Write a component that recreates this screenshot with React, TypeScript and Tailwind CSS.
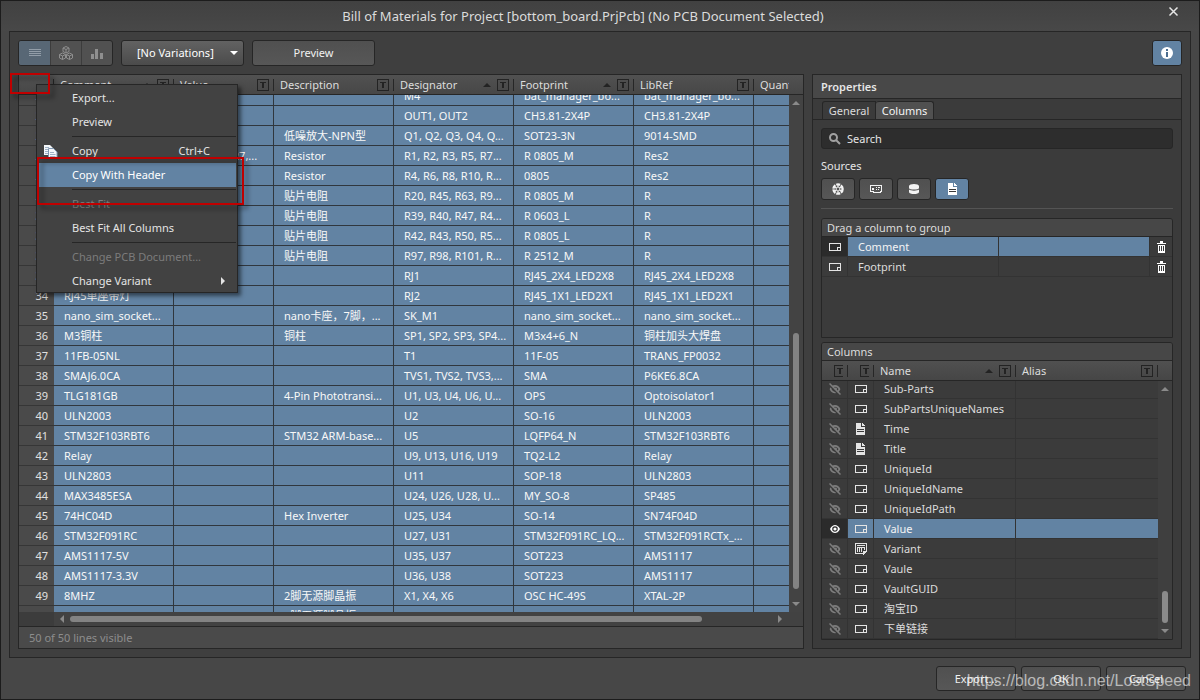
import { useState } from "react";
import type { ReactNode } from "react";

type Part = {
  id: number;
  comment?: string;
  value?: string;
  description?: string;
  designator?: string;
  footprint?: string;
  libRef?: string;
};

const parts: Part[] = [
  { id: 24, designator: "M4", footprint: "bat_manager_bo...", libRef: "bat_manager_bo..." },
  { id: 25, designator: "OUT1, OUT2", footprint: "CH3.81-2X4P", libRef: "CH3.81-2X4P" },
  { id: 26, description: "低噪放大-NPN型", designator: "Q1, Q2, Q3, Q4, Q...", footprint: "SOT23-3N", libRef: "9014-SMD" },
  { id: 27, value: "R1,R2,R5,R7,...", description: "Resistor", designator: "R1, R2, R3, R5, R7...", footprint: "R 0805_M", libRef: "Res2" },
  { id: 28, description: "Resistor", designator: "R4, R6, R8, R10, R...", footprint: "0805", libRef: "Res2" },
  { id: 29, description: "贴片电阻", designator: "R20, R45, R63, R9...", footprint: "R 0805_M", libRef: "R" },
  { id: 30, description: "贴片电阻", designator: "R39, R40, R47, R4...", footprint: "R 0603_L", libRef: "R" },
  { id: 31, description: "贴片电阻", designator: "R42, R43, R50, R5...", footprint: "R 0805_L", libRef: "R" },
  { id: 32, description: "贴片电阻", designator: "R97, R98, R101, R...", footprint: "R 2512_M", libRef: "R" },
  { id: 33, designator: "RJ1", footprint: "RJ45_2X4_LED2X8", libRef: "RJ45_2X4_LED2X8" },
  { id: 34, comment: "RJ45单座带灯", designator: "RJ2", footprint: "RJ45_1X1_LED2X1", libRef: "RJ45_1X1_LED2X1" },
  { id: 35, comment: "nano_sim_socket...", description: "nano卡座，7脚，...", designator: "SK_M1", footprint: "nano_sim_socket...", libRef: "nano_sim_socket..." },
  { id: 36, comment: "M3铜柱", description: "铜柱", designator: "SP1, SP2, SP3, SP4...", footprint: "M3x4+6_N", libRef: "铜柱加头大焊盘" },
  { id: 37, comment: "11FB-05NL", designator: "T1", footprint: "11F-05", libRef: "TRANS_FP0032" },
  { id: 38, comment: "SMAJ6.0CA", designator: "TVS1, TVS2, TVS3,...", footprint: "SMA", libRef: "P6KE6.8CA" },
  { id: 39, comment: "TLG181GB", description: "4-Pin Phototransi...", designator: "U1, U3, U4, U6, U...", footprint: "OPS", libRef: "Optoisolator1" },
  { id: 40, comment: "ULN2003", designator: "U2", footprint: "SO-16", libRef: "ULN2003" },
  { id: 41, comment: "STM32F103RBT6", description: "STM32 ARM-base...", designator: "U5", footprint: "LQFP64_N", libRef: "STM32F103RBT6" },
  { id: 42, comment: "Relay", designator: "U9, U13, U16, U19", footprint: "TQ2-L2", libRef: "Relay" },
  { id: 43, comment: "ULN2803", designator: "U11", footprint: "SOP-18", libRef: "ULN2803" },
  { id: 44, comment: "MAX3485ESA", designator: "U24, U26, U28, U...", footprint: "MY_SO-8", libRef: "SP485" },
  { id: 45, comment: "74HC04D", description: "Hex Inverter", designator: "U25, U34", footprint: "SO-14", libRef: "SN74F04D" },
  { id: 46, comment: "STM32F091RC", designator: "U27, U31", footprint: "STM32F091RC_LQ...", libRef: "STM32F091RCTx_..." },
  { id: 47, comment: "AMS1117-5V", designator: "U35, U37", footprint: "SOT223", libRef: "AMS1117" },
  { id: 48, comment: "AMS1117-3.3V", designator: "U36, U38", footprint: "SOT223", libRef: "AMS1117" },
  { id: 49, comment: "8MHZ", description: "2脚无源脚晶振", designator: "X1, X4, X6", footprint: "OSC HC-49S", libRef: "XTAL-2P" },
  { id: 50, description: "4脚无源脚晶振" },
];

const gridColumns = [
  { name: "Comment", sorted: true },
  { name: "Value", sorted: false },
  { name: "Description", sorted: false },
  { name: "Designator", sorted: true },
  { name: "Footprint", sorted: true },
  { name: "LibRef", sorted: false },
];

const properties = [
  { name: "Sub-Parts", icon: "param" },
  { name: "SubPartsUniqueNames", icon: "param" },
  { name: "Time", icon: "doc" },
  { name: "Title", icon: "doc" },
  { name: "UniqueId", icon: "param" },
  { name: "UniqueIdName", icon: "param" },
  { name: "UniqueIdPath", icon: "param" },
  { name: "Value", icon: "param" },
  { name: "Variant", icon: "variant" },
  { name: "Vaule", icon: "param" },
  { name: "VaultGUID", icon: "param" },
  { name: "淘宝ID", icon: "param" },
  { name: "下单链接", icon: "param" },
];

const buttonStyle =
  "flex items-center justify-center rounded-[3px] border border-[#262626] bg-linear-to-b from-[#505050] to-[#575757] text-[#f0f0f0]";

function Arrow({ dir, className }: { dir: "up" | "down" | "left" | "right"; className?: string }) {
  const shapes = { up: "M0 5 4 1 8 5Z", down: "M0 1 4 5 8 1Z", left: "M5 0 1 4 5 8Z", right: "M1 0 5 4 1 8Z" };
  const flat = dir === "up" || dir === "down";
  return (
    <svg width={flat ? 8 : 6} height={flat ? 6 : 8} className={className} fill="currentColor">
      <path d={shapes[dir]} />
    </svg>
  );
}

function FilterButton({ label }: { label: string }) {
  return (
    <button aria-label={label} className="shrink-0 text-[#232323]">
      <svg width="12" height="12" fill="none" stroke="currentColor" shapeRendering="crispEdges">
        <path d="M.5 .5h11v11h-11z" />
        <path d="M3 3h6v1H3zM5 4h2v5H5z" fill="currentColor" stroke="none" />
      </svg>
    </button>
  );
}

function ParamIcon() {
  return (
    <svg width="12" height="8" fill="none" stroke="#e4e4e4" shapeRendering="crispEdges">
      <path d="M.5 .5h11v7h-11zM8.500 7V4.500H11" />
    </svg>
  );
}

function DocIcon({ color }: { color: string }) {
  return (
    <svg width="9" height="12" shapeRendering="crispEdges">
      <path d="M0 0h5v4h4v8H0z" fill={color} />
      <path d="M6 0h1v1h1v1h1v1H6z" fill={color} />
      <path d="M1 6.500h7M1 8.500h7" stroke="#3b3b3b" />
    </svg>
  );
}

function VariantIcon() {
  return (
    <svg width="12" height="12" fill="none" stroke="#e4e4e4" shapeRendering="crispEdges">
      <path d="M8 10.500H.5V.5h11V8M2 2.500h8M2 4.500h8M2.500 5v4M4.500 5v4M6.500 5v4M9.500 5v2" />
      <path d="M8 8h4l-4 4z" fill="#e4e4e4" stroke="none" />
    </svg>
  );
}

function EyeIcon() {
  return (
    <svg width="12" height="10">
      <path d="M1 5C2.500 2 4.300 1 6 1S9.500 2 11 5C9.500 8 7.700 9 6 9S2.500 8 1 5Z" fill="#fff" />
      <circle cx="6" cy="5" r="2.200" fill="#fff" stroke="#2b2b2b" strokeWidth="1.200" />
    </svg>
  );
}

function HiddenEyeIcon() {
  return (
    <svg width="12" height="12" fill="none" stroke="#7d7d7d">
      <path d="M1.500 6.200C2.600 3.800 4.200 2.900 6 2.900S9.400 3.800 10.500 6.200C9.400 8.600 7.800 9.500 6 9.500S2.600 8.600 1.500 6.200Z" strokeWidth="1.600" />
      <circle cx="6.500" cy="6" r="1.500" fill="#7d7d7d" stroke="none" />
      <path d="M0 1.800 10.200 12" stroke="#3b3b3b" strokeWidth="1.600" />
      <path d="M.5 .5 11.500 11.500" strokeWidth="1.500" />
    </svg>
  );
}

function TrashIcon() {
  return (
    <svg width="9" height="12" shapeRendering="crispEdges">
      <path d="M3 0h3v2h3v1H0V2h3zM1 4h7v8H1z" fill="#fff" />
      <path d="M2.500 5v5M4.500 5v5M6.500 5v5" stroke="#3b3b3b" />
    </svg>
  );
}

function ColumnIcon({ icon }: { icon: string }) {
  if (icon === "doc") return <DocIcon color="#e4e4e4" />;
  if (icon === "variant") return <VariantIcon />;
  return <ParamIcon />;
}

function TitleBar() {
  return (
    <header className="relative flex h-[30px] shrink-0 items-center justify-center bg-linear-to-b from-[#414141] to-[#484848]">
      <h1 className="pr-[34px] text-[13px] text-[#dcdcdc]">
        Bill of Materials for Project [bottom_board.PrjPcb] (No PCB Document Selected)
      </h1>
      <button aria-label="Close" className="absolute top-[5px] right-[20px] text-[#e6e6e6]">
        <svg width="11" height="11" stroke="currentColor" strokeWidth="1.500">
          <path d="M1.500 1.500l8 8M9.500 1.500l-8 8" />
        </svg>
      </button>
    </header>
  );
}

function Toolbar() {
  return (
    <div className="flex h-[26px] shrink-0 gap-2">
      <div className="flex overflow-hidden rounded-[3px] border border-[#262626] bg-[#515151] text-[#8f8f8f]">
        <button aria-label="List view" className="flex w-[31px] items-center justify-center bg-[#586775] text-[#929da8]">
          <svg width="12" height="8" stroke="currentColor" shapeRendering="crispEdges">
            <path d="M0 .5h12M0 2.500h12M0 4.500h12M0 6.500h12" />
          </svg>
        </button>
        <button aria-label="Grouped view" className="flex w-[31px] items-center justify-center border-l border-[#3c3c3c]">
          <svg width="14" height="14" fill="none" stroke="currentColor">
            <path d="M7 .5 10 2v3.500L7 7 4 5.500V2zM4 2l3 1.500L10 2M7 3.500V7" />
            <path d="M3.500 7l3 1.500V12l-3 1.500-3-1.500V8.500zM.5 8.500l3 1.500 3-1.500M3.500 10v3.500" />
            <path d="M10.500 7l3 1.500V12l-3 1.500-3-1.500V8.500zM7.500 8.500l3 1.500 3-1.500M10.500 10v3.500" />
          </svg>
        </button>
        <button aria-label="Chart view" className="flex w-[31px] items-center justify-center border-l border-[#3c3c3c]">
          <svg width="12" height="10" fill="currentColor" className="mt-px">
            <path d="M0 5h3v5H0zM4 0h3v10H4zM9 4h3v6H9z" />
          </svg>
        </button>
      </div>
      <div className="relative w-[123px] rounded-[3px] border border-[#262626] bg-linear-to-b from-[#626262] to-[#4b4b4b] text-white">
        <select aria-label="Variant" className="h-full w-full appearance-none bg-transparent pl-[15px] outline-none">
          <option>[No Variations]</option>
        </select>
        <Arrow dir="down" className="pointer-events-none absolute top-[9px] right-[5px]" />
      </div>
      <button className={`${buttonStyle} w-[123px]`}>Preview</button>
      <button
        aria-label="Information"
        className="ml-auto flex w-[30px] items-center justify-center rounded-[3px] border border-[#262626] bg-[#6283a3]"
      >
        <svg width="12" height="12">
          <circle cx="6" cy="6" r="6" fill="#fff" />
          <path d="M5 2h2v2H5zM5 5h2v5H5z" fill="#4c6e8f" />
        </svg>
      </button>
    </div>
  );
}

function GridCols() {
  return (
    <colgroup>
      <col className="w-[35px]" />
      <col className="w-[120px]" />
      <col className="w-[100px]" />
      <col className="w-[120px]" />
      <col className="w-[120px]" />
      <col className="w-[120px]" />
      <col className="w-[120px]" />
      <col />
    </colgroup>
  );
}

function Cell({ children }: { children?: ReactNode }) {
  return (
    <td className="truncate border-r border-b border-[#30373e] bg-[#6283a3] p-0 pl-[10px] text-[#f8f8f8] last:border-r-0">
      {children}
    </td>
  );
}

function PartsGrid() {
  return (
    <section className="flex min-w-0 flex-1 flex-col border border-[#262626] bg-[#4a4a4a]">
      <div className="shrink-0 border-b border-[#262626] bg-linear-to-b from-[#515151] to-[#474747] pr-[14px]">
        <table className="w-full table-fixed border-collapse">
          <GridCols />
          <thead>
            <tr className="h-[19px]">
              <td className="p-0">
                <span className="ml-auto block h-3 w-px bg-[#262626]" />
              </td>
              {gridColumns.map((column) => (
                <th key={column.name} className="p-0 font-normal">
                  <div className="flex items-center border-r border-[#262626] pr-[4px] pl-[6px]">
                    <span className="flex h-3 flex-1 items-center">{column.name}</span>
                    {column.sorted && <Arrow dir="up" className="mr-[6px] text-[#232323]" />}
                    <FilterButton label={`Filter ${column.name}`} />
                  </div>
                </th>
              ))}
              <th className="overflow-hidden p-0 pl-[6px] text-left font-normal whitespace-nowrap">Quantity</th>
            </tr>
          </thead>
        </table>
      </div>
      <div className="flex min-h-0 flex-1">
        <div className="min-w-0 flex-1 overflow-hidden">
          <table className="-mt-[9px] w-full table-fixed border-separate border-spacing-0">
            <GridCols />
            <tbody>
              {parts.map((part) => (
                <tr key={part.id} className="h-5">
                  <th className="border-b border-[#363636] p-0 pr-[6px] text-right font-normal text-[#e0e0e0]">{part.id}</th>
                  <Cell>{part.comment}</Cell>
                  <Cell>{part.value}</Cell>
                  <Cell>{part.description}</Cell>
                  <Cell>{part.designator}</Cell>
                  <Cell>{part.footprint}</Cell>
                  <Cell>{part.libRef}</Cell>
                  <Cell />
                </tr>
              ))}
            </tbody>
          </table>
        </div>
        <div className="flex w-[14px] shrink-0 flex-col items-center bg-[#434343] py-[5px] text-[#8a8a8a]">
          <Arrow dir="up" />
          <div className="flex w-[6px] flex-1 flex-col justify-end pb-3">
            <div className="h-[53%] rounded-full bg-[#838383]" />
          </div>
          <Arrow dir="down" />
        </div>
      </div>
      <div className="flex h-[14px] shrink-0 items-center bg-[#424242] pr-[20px] text-[#8a8a8a]">
        <div className="h-full w-[35px] bg-[#3c3c3c]" />
        <Arrow dir="left" className="ml-[5px]" />
        <div className="flex-1 px-[5px]">
          <div className="h-[6px] w-[90%] rounded-full bg-[#838383]" />
        </div>
        <Arrow dir="right" />
      </div>
      <footer className="flex h-[22px] shrink-0 items-center border-t border-[#262626] pl-[10px] text-[#8d8d8d]">
        50 of 50 lines visible
      </footer>
    </section>
  );
}

function Sources() {
  const sourceStyle = `${buttonStyle} h-[22px] w-[34px]`;
  return (
    <div className="mt-[8px] border-b border-[#545454] pb-[8px]">
      <h3 className="h-[18px] text-[#e6e6e6]">Sources</h3>
      <div className="mt-[3px] flex gap-1">
        <button aria-label="Altium Cloud" className={sourceStyle}>
          <svg width="12" height="12" fill="none" stroke="#f4f4f4">
            <circle cx="6" cy="6" r="4.600" strokeWidth="2.400" strokeDasharray="4 .82" />
            <circle cx="6" cy="6" r="2" strokeWidth="1" />
            <path d="M6 1v3M6 8v3M1.700 3.500l2.600 1.500M7.700 7l2.600 1.500M1.700 8.500l2.600-1.500M7.700 5l2.600-1.500" />
          </svg>
        </button>
        <button aria-label="PCB" className={sourceStyle}>
          <svg width="12" height="9" fill="none" stroke="#f4f4f4" shapeRendering="crispEdges">
            <path d="M.5 .5h11v6h-1v1H3v-1H.5z" />
            <path d="M2 3h2v2H2zM6 2h1v1H6zM8 2h2v1H8zM6 4h1v1H6zM8 4h1v1H8z" fill="#f4f4f4" stroke="none" />
          </svg>
        </button>
        <button aria-label="Database" className={sourceStyle}>
          <svg width="10" height="12">
            <path d="M0 3C0 .3 10 .3 10 3v2C10 7 0 7 0 5zM0 6.500c1.500 1.500 8.500 1.500 10 0V9c0 2.700-10 2.700-10 0z" fill="#f4f4f4" />
          </svg>
        </button>
        <button
          aria-label="Document"
          className="flex h-[22px] w-[34px] items-center justify-center rounded-[3px] border border-[#262626] bg-[#6283a3]"
        >
          <DocIcon color="#fff" />
        </button>
      </div>
    </div>
  );
}

function GroupList() {
  const [selected, setSelected] = useState("Comment");
  return (
    <div className="mt-[9px] h-[120px] shrink-0 overflow-hidden rounded-t-[3px] border border-[#262626]">
      <h3 className="flex h-[18px] items-center border-b border-[#262626] bg-[#474747] pl-[5px] text-[#dcdcdc]">
        Drag a column to group
      </h3>
      <table className="w-full table-fixed border-separate border-spacing-0">
        <colgroup>
          <col className="w-[26px]" />
          <col />
          <col />
          <col className="w-[22px]" />
        </colgroup>
        <tbody>
          {["Comment", "Footprint"].map((name) => {
            const active = name === selected;
            const cell = `border-r border-b border-[#333333] p-0 ${active ? "bg-[#6283a3] text-[#f4f4f4]" : "text-[#dcdcdc]"}`;
            return (
              <tr key={name} className="h-5" onClick={() => setSelected(name)}>
                <td className={`border-r border-b border-[#333333] p-0 pl-[7px] ${active ? "bg-[#2b2b2b]" : ""}`}>
                  <ParamIcon />
                </td>
                <td className={`${cell} pl-[10px]`}>{name}</td>
                <td className={cell} />
                <td className="border-b border-[#333333] p-0 pl-[7px]">
                  <button aria-label={`Remove ${name}`} className="block">
                    <TrashIcon />
                  </button>
                </td>
              </tr>
            );
          })}
        </tbody>
      </table>
    </div>
  );
}

function PropertyCols() {
  return (
    <colgroup>
      <col className="w-[26px]" />
      <col className="w-[26px]" />
      <col className="w-[142px]" />
      <col />
    </colgroup>
  );
}

function NarrowFilter({ label }: { label: string }) {
  return (
    <div className="flex justify-end border-r border-[#262626] pr-[4px]">
      <div className="flex w-[9px] overflow-hidden">
        <FilterButton label={label} />
      </div>
    </div>
  );
}

function ColumnsList() {
  const [selected, setSelected] = useState("Value");
  const headCell = "flex items-center border-r border-[#262626] pr-[4px] pl-[6px]";
  return (
    <div className="mt-1 flex min-h-0 flex-1 flex-col overflow-hidden rounded-t-[3px] border border-[#262626]">
      <h3 className="flex h-[18px] shrink-0 items-center border-b border-[#262626] bg-[#474747] pl-[5px] text-[#dcdcdc]">
        Columns
      </h3>
      <div className="shrink-0 border-b border-[#262626] bg-linear-to-b from-[#505050] to-[#464646] pr-[14px]">
        <table className="w-full table-fixed border-collapse">
          <PropertyCols />
          <thead>
            <tr className="h-[19px]">
              <th className="p-0">
                <NarrowFilter label="Filter visibility" />
              </th>
              <th className="p-0">
                <NarrowFilter label="Filter source" />
              </th>
              <th className="p-0 font-normal">
                <div className={headCell}>
                  <span className="flex h-3 flex-1 items-center">Name</span>
                  <Arrow dir="up" className="mr-[6px] text-[#232323]" />
                  <FilterButton label="Filter Name" />
                </div>
              </th>
              <th className="p-0 font-normal">
                <div className={headCell}>
                  <span className="flex h-3 flex-1 items-center">Alias</span>
                  <FilterButton label="Filter Alias" />
                </div>
              </th>
            </tr>
          </thead>
        </table>
      </div>
      <div className="flex min-h-0 flex-1">
        <div className="min-w-0 flex-1 overflow-hidden">
          <table className="-mt-[2px] w-full table-fixed border-separate border-spacing-0">
            <PropertyCols />
            <tbody>
              {properties.map((property) => {
                const active = property.name === selected;
                const cell = `border-r border-b border-[#333333] p-0 last:border-r-0 ${active ? "bg-[#6283a3] text-[#f4f4f4]" : "text-[#dcdcdc]"}`;
                return (
                  <tr key={property.name} className="h-5" onClick={() => setSelected(property.name)}>
                    <td className={`border-r border-b border-[#333333] p-0 pl-[7px] ${active ? "bg-[#2b2b2b]" : ""}`}>
                      {active ? <EyeIcon /> : <HiddenEyeIcon />}
                    </td>
                    <td className={cell}>
                      <div className="flex justify-center">
                        <ColumnIcon icon={property.icon} />
                      </div>
                    </td>
                    <td className={`${cell} truncate pl-[10px]`}>{property.name}</td>
                    <td className={cell} />
                  </tr>
                );
              })}
            </tbody>
          </table>
        </div>
        <div className="flex w-[14px] shrink-0 flex-col items-center bg-[#3f3f3f] py-[5px] text-[#8a8a8a]">
          <Arrow dir="up" />
          <div className="flex w-[6px] flex-1 flex-col justify-end pb-[5px]">
            <div className="h-8 rounded-full bg-[#8a8a8a]" />
          </div>
          <Arrow dir="down" />
        </div>
      </div>
    </div>
  );
}

function PropertiesPanel() {
  return (
    <aside className="flex w-[370px] shrink-0 flex-col border border-[#262626] bg-[#3b3b3b]">
      <h2 className="flex h-6 shrink-0 items-center border-b border-[#262626] bg-[#484848] pl-[8px] font-semibold text-[#e6e6e6]">
        Properties
      </h2>
      <div className="flex h-[21px] shrink-0 items-end border-b border-[#262626] pl-[9px]" role="tablist">
        <button role="tab" aria-selected="false" className="h-[18px] w-[54px] rounded-tl-[3px] border border-b-0 border-[#262626] text-[#dcdcdc]">
          General
        </button>
        <button role="tab" aria-selected="true" className="h-[18px] w-[58px] rounded-t-[3px] border border-b-0 border-l-0 border-[#262626] bg-[#505050] text-[#f4f4f4]">
          Columns
        </button>
      </div>
      <div className="flex min-h-0 flex-1 flex-col px-[8px] py-[8px]">
        <label className="flex h-[21px] shrink-0 items-center rounded-[3px] border border-[#262626] bg-[#2d2d2d] pl-[7px]">
          <svg width="12" height="12" fill="none" stroke="#a0a0a0" strokeWidth="2">
            <circle cx="4.500" cy="4.500" r="3.500" />
            <path d="M7 7l4 4" />
          </svg>
          <input
            type="text"
            aria-label="Search"
            placeholder="Search"
            className="min-w-0 flex-1 bg-transparent pl-[6px] outline-none placeholder:text-[#e6e6e6]"
          />
        </label>
        <Sources />
        <GroupList />
        <ColumnsList />
      </div>
    </aside>
  );
}

function MenuItem({ label, shortcut, icon, active, disabled, submenu }: {
  label: string;
  shortcut?: string;
  icon?: ReactNode;
  active?: boolean;
  disabled?: boolean;
  submenu?: boolean;
}) {
  return (
    <button
      role="menuitem"
      disabled={disabled}
      className={`flex h-6 w-full items-center pr-[10px] text-left last:h-[23px] ${active ? "bg-[#6283a3] text-white" : "text-[#e4e4e4]"} disabled:text-[#7c7c7c]`}
    >
      <span className="w-[34px] shrink-0 pl-[5px]">{icon}</span>
      <span className="flex-1">{label}</span>
      {shortcut && <span className="pr-[16px]">{shortcut}</span>}
      {submenu && <Arrow dir="right" />}
    </button>
  );
}

function MenuSeparator() {
  return <hr className="my-[2px] ml-[34px] border-t border-[#262626]" />;
}

function CopyIcon() {
  return (
    <svg width="15" height="15">
      <path d="M1 1h6l3 3v7H1z" fill="#f4f7fa" />
      <path d="M2 3.500h4M2 5.500h5M2 7.500h5M2 9.500h5" stroke="#9fb1c5" />
      <path d="M5.500 4.500h5l3.500 3.500v6H5.500z" fill="#f4f7fa" stroke="#7f97b1" />
      <path d="M7 8.500h4M7 10.500h5.500M7 12.500h5.500" stroke="#9fb1c5" />
    </svg>
  );
}

function ContextMenu() {
  return (
    <div
      role="menu"
      className="absolute top-[83px] left-[35px] w-[202px] border border-[#262626] bg-[#424242] px-px pt-px shadow-[3px_3px_4px_rgba(0,0,0,0.5)]"
    >
      <MenuItem label="Export..." />
      <MenuItem label="Preview" />
      <MenuSeparator />
      <MenuItem label="Copy" shortcut="Ctrl+C" icon={<CopyIcon />} />
      <MenuItem label="Copy With Header" active />
      <MenuSeparator />
      <MenuItem label="Best Fit" disabled />
      <MenuItem label="Best Fit All Columns" />
      <MenuSeparator />
      <MenuItem label="Change PCB Document..." disabled />
      <MenuItem label="Change Variant" submenu />
    </div>
  );
}

function Highlight({ className }: { className: string }) {
  return (
    <div
      className={`pointer-events-none absolute border-2 border-[#c00000] drop-shadow-[4px_4px_2px_rgba(0,0,0,0.4)] ${className}`}
    />
  );
}

export default function App() {
  return (
    <div className="relative flex h-screen min-h-[500px] flex-col overflow-hidden border border-[#1c1c1c] bg-[#474747] font-['Noto_Sans','Noto_Sans_CJK_SC',sans-serif] text-[11px] leading-[18px] text-[#dcdcdc]">
      <TitleBar />
      <main className="mx-[8px] flex min-h-0 flex-1 flex-col border border-[#262626] bg-[#3f3f3f] p-[8px]">
        <Toolbar />
        <div className="mt-[8px] flex min-h-0 flex-1 gap-[8px]">
          <PartsGrid />
          <PropertiesPanel />
        </div>
      </main>
      <div className="relative flex shrink-0 justify-end gap-[5px] pt-[8px] pr-[13px] pb-[8px]">
        <button className={`${buttonStyle} h-[25px] w-20`}>Export...</button>
        <button className={`${buttonStyle} h-[25px] w-20`}>OK</button>
        <button className={`${buttonStyle} h-[25px] w-20`}>Cancel</button>
        <span className="pointer-events-none absolute right-[8px] bottom-[6px] font-['Liberation_Sans',sans-serif] text-base text-white/60">
          https://blog.csdn.net/LostSpeed
        </span>
      </div>
      <ContextMenu />
      <Highlight className="top-[72px] left-[9px] h-[21px] w-[40px]" />
      <Highlight className="top-[156px] left-[36px] h-[48px] w-[207px]" />
    </div>
  );
}
